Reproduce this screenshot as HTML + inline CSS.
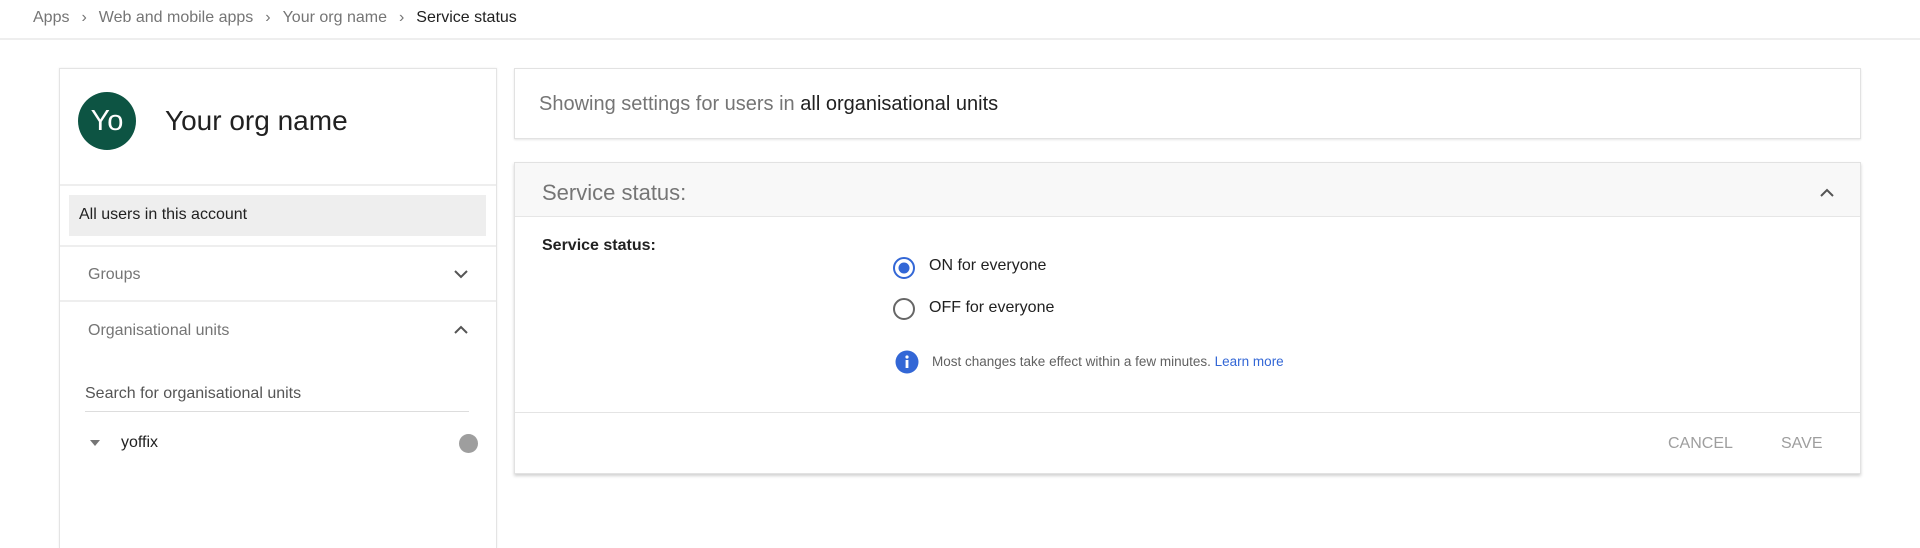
<!DOCTYPE html>
<html><head><meta charset="utf-8"><style>
*{box-sizing:border-box;margin:0;padding:0}
body{width:1920px;height:540px;background:#fff;font-family:"Liberation Sans",sans-serif;position:relative;overflow:hidden;color:#212121}
.a{position:absolute;white-space:nowrap}
.bc{top:9px;left:33px;font-size:16px;color:#757575}
.bc span.s{margin:0 12px;color:#757575}
.hl{position:absolute;left:0;top:38px;width:1920px;height:2px;background:#eee}
.lp{position:absolute;left:59px;top:68px;width:438px;height:480px;border:1px solid #e4e4e4;border-bottom:none;box-shadow:0 0 2px rgba(0,0,0,.08)}
.div{position:absolute;left:0;width:436px;height:2px;background:#eee}
.box{position:absolute;border:1px solid #e2e2e2;box-shadow:0 1px 2px rgba(0,0,0,.1)}
</style></head><body>
<div class="a bc">Apps<span class="s">›</span>Web and mobile apps<span class="s">›</span>Your org name<span class="s">›</span><span style="color:#212121">Service status</span></div>
<div class="hl"></div>

<div class="lp">
  <div class="a" style="left:18px;top:23px;width:58px;height:58px;border-radius:50%;background:#0d5443;color:#fff;font-size:29px;line-height:58px;text-align:center">Yo</div>
  <div class="a" style="left:105px;top:36px;font-size:28px;color:#212121">Your org name</div>
  <div class="div" style="top:115px"></div>
  <div class="a" style="left:9px;top:126px;width:417px;height:41px;background:#eee"></div>
  <div class="a" style="left:19px;top:137px;font-size:16px;color:#212121">All users in this account</div>
  <div class="div" style="top:176px"></div>
  <div class="a" style="left:28px;top:197px;font-size:16px;color:#757575">Groups</div>
  <svg class="a" style="left:393px;top:199px" width="16" height="12" viewBox="0 0 16 12"><path d="M2 3l6 6 6-6" stroke="#555" stroke-width="2" fill="none"/></svg>
  <div class="div" style="top:231px"></div>
  <div class="a" style="left:28px;top:253px;font-size:16px;color:#757575">Organisational units</div>
  <svg class="a" style="left:393px;top:255px" width="16" height="12" viewBox="0 0 16 12"><path d="M2 9l6-6 6 6" stroke="#555" stroke-width="2" fill="none"/></svg>
  <div class="a" style="left:25px;top:316px;font-size:16px;color:#555">Search for organisational units</div>
  <div class="a" style="left:25px;top:342px;width:384px;height:1px;background:#ddd"></div>
  <svg class="a" style="left:29px;top:370px" width="12" height="8" viewBox="0 0 12 8"><path d="M1 1h10L6 7z" fill="#757575"/></svg>
  <div class="a" style="left:61px;top:365px;font-size:16px;color:#212121">yoffix</div>
  <div class="a" style="left:399px;top:365px;width:19px;height:19px;border-radius:50%;background:#9e9e9e"></div>
</div>

<div class="box" style="left:514px;top:68px;width:1347px;height:71px"></div>
<div class="a" style="left:539px;top:93px;font-size:20px;color:#757575">Showing settings for users in <span style="color:#212121">all organisational units</span></div>

<div class="box" style="left:514px;top:162px;width:1347px;height:312px;box-shadow:0 2px 3px rgba(0,0,0,.18)"></div>
<div class="a" style="left:515px;top:163px;width:1345px;height:54px;background:#f8f8f8;border-bottom:1px solid #e6e6e6"></div>
<div class="a" style="left:542px;top:180px;font-size:22px;color:#757575">Service status:</div>
<svg class="a" style="left:1819px;top:187px" width="16" height="12" viewBox="0 0 16 12"><path d="M2 9l6-6 6 6" stroke="#555" stroke-width="2" fill="none"/></svg>
<div class="a" style="left:542px;top:237px;font-size:16px;font-weight:bold;color:#212121">Service status:</div>
<svg class="a" style="left:892px;top:256px" width="24" height="24"><circle cx="12" cy="12" r="10" stroke="#3367d6" stroke-width="2" fill="none"/><circle cx="12" cy="12" r="5.5" fill="#3367d6"/></svg>
<div class="a" style="left:929px;top:257px;font-size:16px">ON for everyone</div>
<svg class="a" style="left:892px;top:297px" width="24" height="24"><circle cx="12" cy="12" r="10" stroke="#666" stroke-width="2" fill="none"/></svg>
<div class="a" style="left:929px;top:299px;font-size:16px">OFF for everyone</div>
<svg class="a" style="left:895px;top:350px" width="24" height="24"><circle cx="12" cy="12" r="11.5" fill="#3367d6"/><circle cx="12" cy="7" r="1.6" fill="#fff"/><rect x="10.6" y="10" width="2.8" height="8" fill="#fff"/></svg>
<div class="a" style="left:932px;top:354px;font-size:13.5px;color:#616161">Most changes take effect within a few minutes. <span style="color:#3367d6">Learn more</span></div>
<div class="a" style="left:515px;top:412px;width:1345px;height:1px;background:#e4e4e4"></div>
<div class="a" style="left:1668px;top:435px;font-size:16px;color:#9e9e9e">CANCEL</div>
<div class="a" style="left:1781px;top:435px;font-size:16px;color:#9e9e9e">SAVE</div>
</body></html>
